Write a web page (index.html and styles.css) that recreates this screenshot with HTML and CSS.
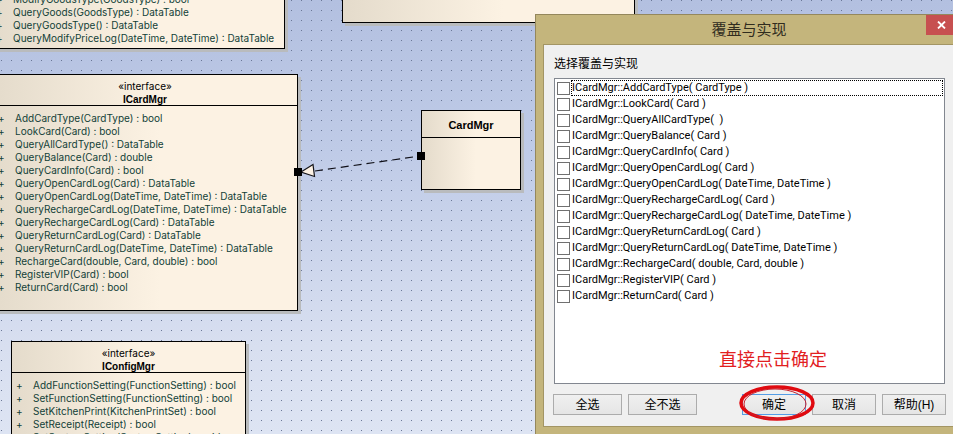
FILE: index.html
```html
<!DOCTYPE html>
<html lang="zh-CN">
<head>
<meta charset="utf-8">
<title>覆盖与实现</title>
<link rel="stylesheet" href="styles.css">
</head>
<body>
<main class="canvas">
  <section class="node node-goods">
    <ul class="ops ops-goods">
      <li>ModifyGoodsType(GoodsType) : bool</li>
      <li>QueryGoods(GoodsType) : DataTable</li>
      <li>QueryGoodsType() : DataTable</li>
      <li>QueryModifyPriceLog(DateTime, DateTime) : DataTable</li>
    </ul>
  </section>

  <section class="node node-top"></section>

  <section class="node node-card-interface">
    <header class="node-head"><span>«interface»</span><strong>ICardMgr</strong></header>
    <ul class="ops">
      <li>AddCardType(CardType) : bool</li>
      <li>LookCard(Card) : bool</li>
      <li>QueryAllCardType() : DataTable</li>
      <li>QueryBalance(Card) : double</li>
      <li>QueryCardInfo(Card) : bool</li>
      <li>QueryOpenCardLog(Card) : DataTable</li>
      <li>QueryOpenCardLog(DateTime, DateTime) : DataTable</li>
      <li>QueryRechargeCardLog(DateTime, DateTime) : DataTable</li>
      <li>QueryRechargeCardLog(Card) : DataTable</li>
      <li>QueryReturnCardLog(Card) : DataTable</li>
      <li>QueryReturnCardLog(DateTime, DateTime) : DataTable</li>
      <li>RechargeCard(double, Card, double) : bool</li>
      <li>RegisterVIP(Card) : bool</li>
      <li>ReturnCard(Card) : bool</li>
    </ul>
  </section>

  <section class="node node-config">
    <header class="node-head"><span>«interface»</span><strong>IConfigMgr</strong></header>
    <ul class="ops ops-config">
      <li>AddFunctionSetting(FunctionSetting) : bool</li>
      <li>SetFunctionSetting(FunctionSetting) : bool</li>
      <li>SetKitchenPrint(KitchenPrintSet) : bool</li>
      <li>SetReceipt(Receipt) : bool</li>
      <li>SetSystemSetting(SystemSetting) : void</li>
    </ul>
  </section>

  <section class="node node-card">
    <header class="node-head node-head-small"><strong>CardMgr</strong></header>
  </section>

  <svg class="link" width="132" height="40" viewBox="0 0 132 40" aria-hidden="true">
    <path d="M21 21 L126 6" fill="none" stroke="#101018" stroke-width="1.2" stroke-dasharray="8 5"/>
    <path d="M7 22 L19 14.500 L20.500 26.500 Z" fill="#fdf2e4" stroke="#15151a" stroke-width="1.200"/>
    <rect x="0" y="18" width="8" height="8"/>
    <rect x="123" y="2" width="8" height="8"/>
  </svg>
</main>

<section class="dialog" role="dialog" aria-labelledby="dialog-title">
  <header class="titlebar">
    <h1 id="dialog-title">覆盖与实现</h1>
    <button class="close" type="button" aria-label="关闭">
      <svg width="9" height="8" viewBox="0 0 9 8"><path d="M1 .5 L8 7.500 M8 .5 L1 7.500" stroke="#fff" stroke-width="1.800"/></svg>
    </button>
  </header>
  <form class="client">
    <p class="caption">选择覆盖与实现</p>
    <ul class="list">
      <li><input type="checkbox" id="m1"><label class="focused" for="m1">ICardMgr::AddCardType( CardType )</label></li>
      <li><input type="checkbox" id="m2"><label for="m2">ICardMgr::LookCard( Card )</label></li>
      <li><input type="checkbox" id="m3"><label for="m3">ICardMgr::QueryAllCardType(&nbsp; )</label></li>
      <li><input type="checkbox" id="m4"><label for="m4">ICardMgr::QueryBalance( Card )</label></li>
      <li><input type="checkbox" id="m5"><label for="m5">ICardMgr::QueryCardInfo( Card )</label></li>
      <li><input type="checkbox" id="m6"><label for="m6">ICardMgr::QueryOpenCardLog( Card )</label></li>
      <li><input type="checkbox" id="m7"><label for="m7">ICardMgr::QueryOpenCardLog( DateTime, DateTime )</label></li>
      <li><input type="checkbox" id="m8"><label for="m8">ICardMgr::QueryRechargeCardLog( Card )</label></li>
      <li><input type="checkbox" id="m9"><label for="m9">ICardMgr::QueryRechargeCardLog( DateTime, DateTime )</label></li>
      <li><input type="checkbox" id="m10"><label for="m10">ICardMgr::QueryReturnCardLog( Card )</label></li>
      <li><input type="checkbox" id="m11"><label for="m11">ICardMgr::QueryReturnCardLog( DateTime, DateTime )</label></li>
      <li><input type="checkbox" id="m12"><label for="m12">ICardMgr::RechargeCard( double, Card, double )</label></li>
      <li><input type="checkbox" id="m13"><label for="m13">ICardMgr::RegisterVIP( Card )</label></li>
      <li><input type="checkbox" id="m14"><label for="m14">ICardMgr::ReturnCard( Card )</label></li>
    </ul>
    <div class="actions">
      <button class="btn btn-wide" type="button">全选</button>
      <button class="btn btn-wide" type="button">全不选</button>
      <span class="spacer"></span>
      <span class="ok-wrap">
        <button class="btn btn-default" type="button">确定</button>
        <svg class="ring" width="78" height="38" viewBox="0 0 78 38" aria-hidden="true">
          <ellipse cx="39" cy="19" rx="36" ry="16" fill="none" stroke="#e00a10" stroke-width="3.500"/>
          <ellipse cx="37" cy="20" rx="31" ry="15" fill="none" stroke="#c8202c" stroke-width="1"/>
        </svg>
      </span>
      <button class="btn" type="button">取消</button>
      <button class="btn" type="button">帮助(H)</button>
    </div>
    <p class="note">直接点击确定</p>
  </form>
</section>
</body>
</html>
```

FILE: styles.css
```css
* { box-sizing: border-box; }

body {
  margin: 0;
  height: 100vh;
  position: relative;
  overflow: hidden;
  font-family: "Liberation Sans", "Noto Sans CJK SC", sans-serif;
}

ul, p, h1 { margin: 0; padding: 0; }
ul { list-style: none; }

.canvas {
  position: relative;
  height: 100%;
  overflow: hidden;
  background:
    conic-gradient(from 270deg at 1px 1px, #6b7897 90deg, transparent 0) 1px 0 / 10px 10px,
    linear-gradient(#b3c0e0, #bfcbe7 35%, #d8dff0 80%, #dde4f3);
}

/* Diagram nodes */
.node {
  position: absolute;
  border: 1px solid #000;
  background: linear-gradient(90deg, #e4dbcb, #fcf2e3 55%);
  box-shadow: 3px 3px 0 #b9bbbd;
  font-size: 10px;
  line-height: 13px;
}
.node-goods { left: -10px; top: -30px; width: 295px; height: 79px; }
.node-top { left: 342px; top: -30px; width: 293px; height: 53px; }
.node-card-interface { left: -8px; top: 74px; width: 306px; height: 237px; }
.node-config { left: 11px; top: 341px; width: 235px; height: 120px; }
.node-card { left: 421px; top: 110px; width: 100px; height: 80px; }

.node-head {
  display: flex;
  flex-direction: column;
  align-items: center;
  height: 31px;
  padding-top: 5px;
  border-bottom: 1px solid #000;
  color: #000;
}
.node-head span { font-family: Inter, sans-serif; }
.node-head-small { height: 27px; padding-top: 8px; font-size: 11px; }

.ops {
  padding: 6px 0 0 22px;
  font-family: Inter, "Liberation Sans", sans-serif;
  color: #123f38;
  white-space: nowrap;
}
.ops li { position: relative; }
.ops li::before { content: "+"; position: absolute; left: -17px; }
.ops-goods { padding-top: 22px; }
.ops-config { padding-left: 21px; }

.link { position: absolute; left: 294px; top: 150px; }

/* Dialog window */
.dialog {
  position: absolute;
  left: 535px;
  right: -10px;
  top: 14px;
  bottom: -1px;
  display: flex;
  flex-direction: column;
  padding: 0 7px 7px;
  background: #c4b57c;
  border: 1px solid #94875c;
}
.titlebar { position: relative; height: 29px; }
.titlebar h1 {
  text-align: center;
  font-size: 15px;
  font-weight: 400;
  line-height: 29px;
  color: #302c1e;
}
.close {
  position: absolute;
  right: -2px;
  top: 0;
  width: 31px;
  height: 20px;
  padding: 0;
  border: 0;
  background: #c75050;
  display: flex;
  align-items: center;
  justify-content: center;
}
.client {
  position: relative;
  flex: 1;
  display: flex;
  flex-direction: column;
  padding: 9px 8px 11px 9px;
  background: #f0f0f0;
  border: 1px solid #a39564;
}
.caption { font-size: 12px; line-height: 20px; padding: 0 1px; color: #000; }
.list {
  flex: 1;
  margin: 4px 1px 10px 1px;
  padding: 1px;
  background: #fff;
  border: 1px solid #828790;
}
.list li { display: flex; align-items: center; height: 16px; }
.list input {
  appearance: none;
  width: 13px;
  height: 13px;
  margin: 0 1px;
  border: 1px solid #707070;
  background: #fff;
}
.list label {
  flex: 1;
  font-family: Roboto, sans-serif;
  font-size: 11px;
  line-height: 14px;
  border: 1px solid transparent;
  white-space: nowrap;
  color: #000;
}
.list .focused { border: 1px dotted #000; }

.actions { display: flex; gap: 6px; }
.spacer { flex: 1; }
.btn {
  width: 64px;
  height: 21px;
  padding: 1px 0 0;
  border: 1px solid #acacac;
  background: linear-gradient(#f0f0f0, #e5e5e5);
  font: 12px/18px "Liberation Sans", "Noto Sans CJK SC", sans-serif;
  color: #000;
}
.btn-wide { width: 69px; }
.btn-default { border-color: #569de5; }
.ok-wrap { position: relative; display: flex; }
.ring { position: absolute; left: -4px; top: -10px; pointer-events: none; }
.note {
  position: absolute;
  left: 175px;
  top: 302px;
  font-size: 18px;
  line-height: 26px;
  color: #e2201f;
}
```
